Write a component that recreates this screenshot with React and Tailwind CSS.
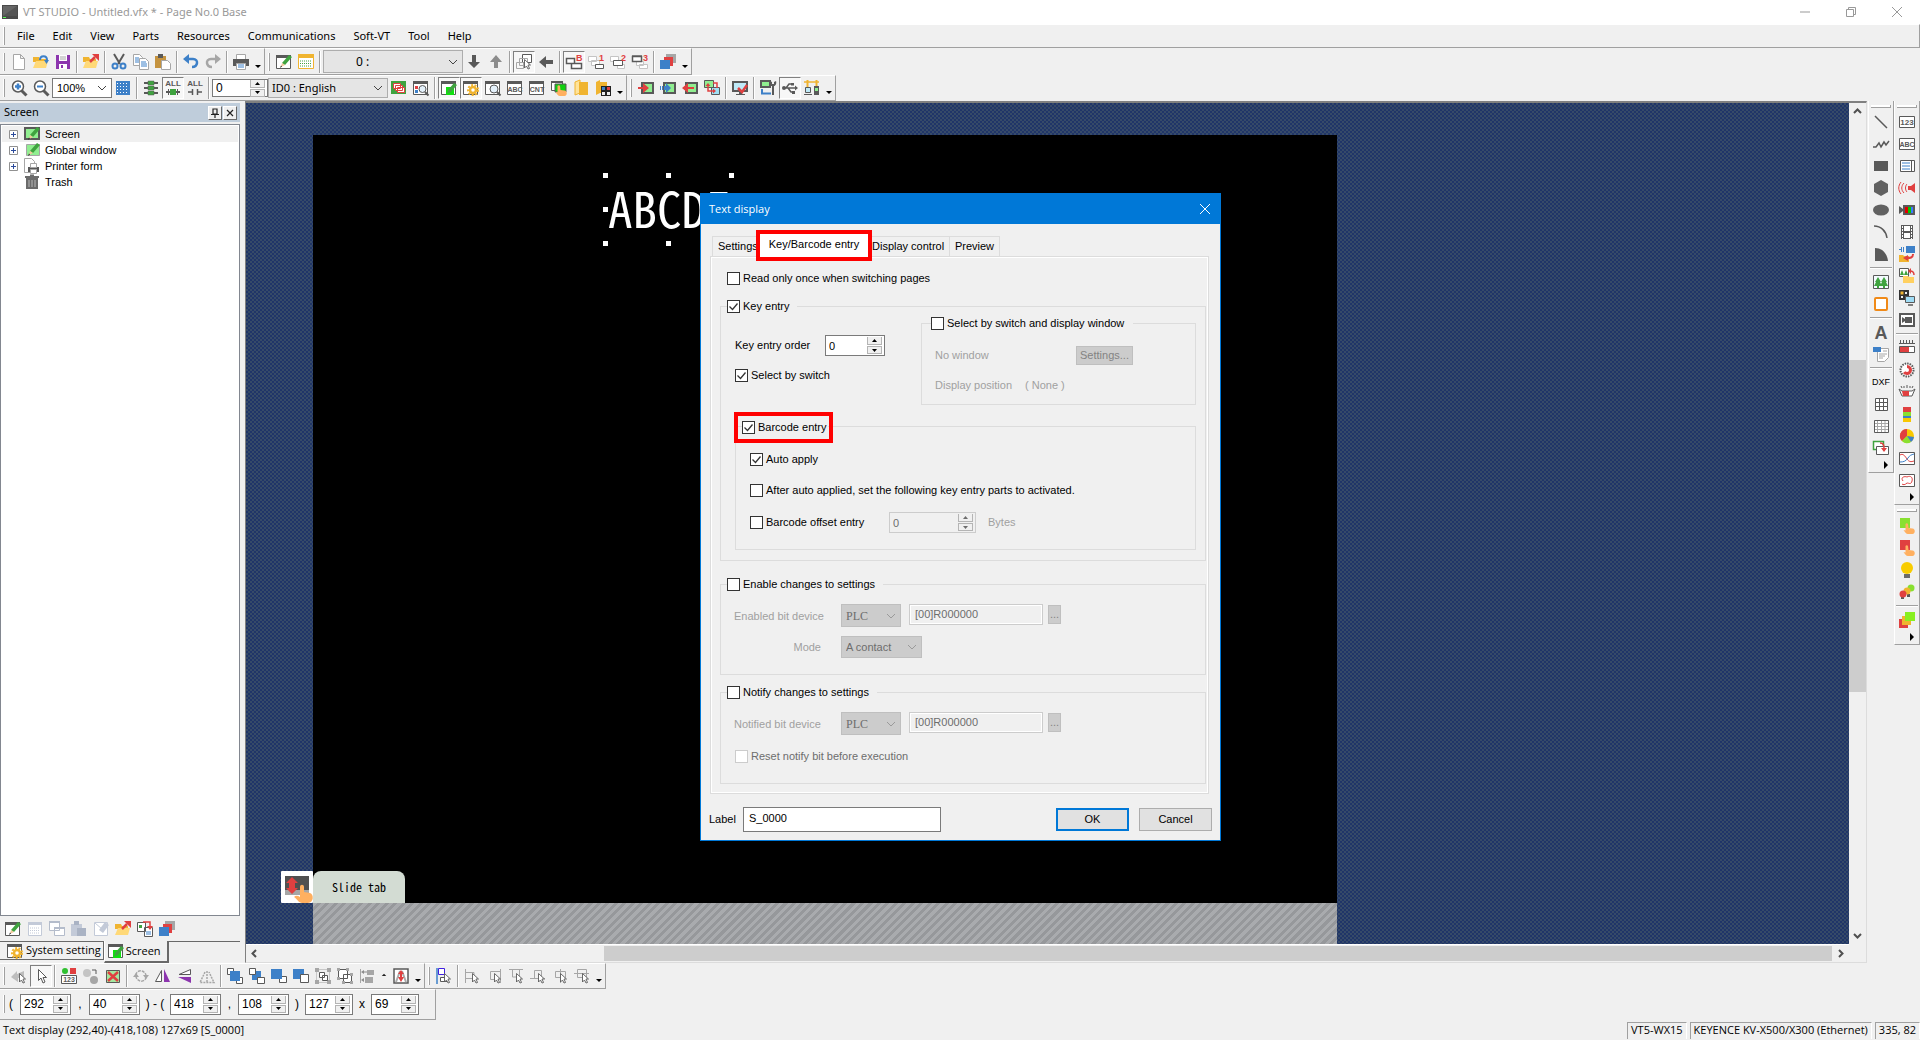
import { Fragment } from "react"

const K = "#595959"
const G = "#a6a6a6"
const B = "#3d80c8"
const R = "#e04040"
const Y = "#f0b430"
const N = "#3fa33f"
const L = "#90ee90"

const folder = (
  <>
    <path d="M0 3h6l1 2h6v3H0z" fill={Y} />
    <path d="M0 14l3-7h12l-2 7z" fill="#ffd978" />
  </>
)
const win = (
  <>
    <path d="M.5 1.500h14v13H.5z" fill="#fff" stroke={K} />
    <path d="M0 1h15v3H0z" fill={K} />
  </>
)
const pencil = (
  <>
    <path d="M6 9l7-8 3 2-7 8z" fill={N} />
    <path d="M6 9l3 2-4 2z" fill="#f2c89a" />
    <path d="M5 11.500l1 1-2 1.500z" fill="#222" />
  </>
)
const cursor = <path d="M8.500 5.500v8.500l2-2 1.500 3 1.500-.5-1.500-3.500h2.500z" fill="#fff" stroke={K} strokeWidth=".9" />
const hand = <path d="M6.500 6c.5-1 2-1 2.500 0l.5 4 4 .5c3 .5 3 5 0 5.500H9c-2 0-3-2-4.500-4l2 .5z" fill="#ffb060" />
const layers = (
  <>
    <path d="M6 0h10v9H6z" fill={G} />
    <path d="M4 3h9v9H4z" fill={R} />
    <path d="M0 6h10v9H0z" fill={B} />
  </>
)

function Word({ children, color = K, size = 8, y = 11 }) {
  return (
    <text x="8" y={y} fontSize={size} fill={color} textAnchor="middle" fontFamily="Liberation Sans, sans-serif" fontWeight="bold">
      {children}
    </text>
  )
}

const glyphs = {
  app: (
    <>
      <path d="M0 1h16v14H0z" fill="#4a4a4a" />
      <path d="M1 2h14v10H1z" fill="#666" />
      <path d="M1 12L15 2v10z" fill="#555" />
      <path d="M1 13h3v1H1z" fill="#5f5" />
    </>
  ),
  new: <path d="M2.500.5h7l4 4v11h-11zM9.500.5v4h4" fill="#fff" stroke={G} />,
  open: (
    <>
      {folder}
      <path d="M7 6c0-5 7-5 7 0" fill="none" stroke={B} strokeWidth="2" />
      <path d="M11 6h5l-2.500 4z" fill={B} />
    </>
  ),
  save: (
    <>
      <path d="M1 1h14v14H1z" fill="#8c35ae" />
      <path d="M4 1h8v6H4zM4 10h8v5H4z" fill="#fff" />
      <path d="M5 3h6M5 5h6" stroke={G} />
      <path d="M6 11h2v3H6z" fill="#8c35ae" />
    </>
  ),
  export: (
    <>
      {folder}
      <path d="M7 8l5-5" stroke={R} strokeWidth="2.500" />
      <path d="M9 0h7v7z" fill={R} />
    </>
  ),
  cut: (
    <>
      <path d="M3 0l6 10M13 0L7 10" stroke={K} strokeWidth="2" />
      <circle cx="4" cy="12" r="2.500" fill="none" stroke={B} strokeWidth="2" />
      <circle cx="12" cy="12" r="2.500" fill="none" stroke={B} strokeWidth="2" />
    </>
  ),
  copy: (
    <>
      <path d="M.5.5h6l3 3v8h-9z" fill="#fff" stroke={G} />
      <path d="M2 4h4M2 6h4M2 8h4" stroke={B} />
      <path d="M6.500 4.500h6l3 3v8h-9z" fill="#fff" stroke={G} />
      <path d="M8 8h5M8 10h6M8 12h6" stroke={B} />
    </>
  ),
  paste: (
    <>
      <path d="M0 2h11v12H0z" fill="#c5933f" />
      <path d="M3 0h5v4H3z" fill={K} />
      <path d="M6.500 6.500h6l3 3v6h-9z" fill="#fff" stroke={G} />
    </>
  ),
  undo: (
    <>
      <path d="M3 5h7c6 0 5 8-1 8" fill="none" stroke={B} strokeWidth="2.500" />
      <path d="M0 5l6-5v10z" fill={B} />
    </>
  ),
  redo: (
    <>
      <path d="M13 5H6c-6 0-5 8 1 8" fill="none" stroke={G} strokeWidth="2.500" />
      <path d="M16 5l-6-5v10z" fill={G} />
    </>
  ),
  print: (
    <>
      <path d="M3.500.5h9v5h-9z" fill="#fff" stroke={G} />
      <path d="M0 5h16v7H0z" fill={K} />
      <path d="M3.500 9.500h9v6h-9z" fill="#fff" stroke={G} />
      <path d="M5 11h6M5 13h6" stroke={B} />
    </>
  ),
  edit: (
    <>
      {win}
      {pencil}
    </>
  ),
  calendar: (
    <>
      <path d="M.5.500h15v14H.5z" fill="#fff" stroke={Y} />
      <path d="M0 0h16v4H0z" fill={Y} />
      <path d="M2 7h12M2 9.500h12M2 12h12" stroke={N} strokeDasharray="1 1" />
    </>
  ),
  down: <path d="M6 1h4v7h4l-6 6-6-6h4z" fill={K} />,
  up: <path d="M6 14h4V8h4L8 1 2 8h4z" fill="#8c8c8c" />,
  left: <path d="M15 6v4H8v4L1 8l7-6v4z" fill={K} />,
  pick: (
    <>
      <path d="M6.500.5h9v8h-9z" fill="#fff" stroke={K} />
      <path d="M3.500 4.500h8v7h-8zM.5 8.500h7v6h-7z" fill="none" stroke={G} />
      {cursor}
    </>
  ),
  layerB: (
    <>
      <path d="M5.500 9.500h10v5h-10zM.5 4.500h8v5h-8z" fill="#fff" stroke={K} strokeWidth="1.500" />
      <text x="10" y="7" fontSize="9" fontWeight="bold" fill={R}>B</text>
    </>
  ),
  layer1: (
    <>
      <path d="M.5 2.500h8v5h-8zM3.500 6.500h8v5h-8z" fill="#fff" stroke="#c4c4c4" />
      <path d="M7.500 10.500h8v4h-8z" fill="#fff" stroke={K} />
      <text x="11" y="7" fontSize="9" fontWeight="bold" fill={R}>1</text>
    </>
  ),
  layer2: (
    <>
      <path d="M.5 2.500h8v5h-8zM7.500 10.500h7v4h-7z" fill="#fff" stroke="#c4c4c4" />
      <path d="M3.500 6.500h9v5h-9z" fill="#fff" stroke={K} />
      <text x="11" y="7" fontSize="9" fontWeight="bold" fill={R}>2</text>
    </>
  ),
  layer3: (
    <>
      <path d="M4.500 7.500h7v4h-7zM7.500 10.500h8v4h-8z" fill="#fff" stroke="#c4c4c4" />
      <path d="M.5 2.500h9v5h-9zM0 2h10" fill="#fff" stroke={K} strokeWidth="1.500" />
      <text x="11" y="7" fontSize="9" fontWeight="bold" fill={R}>3</text>
    </>
  ),
  layers,
  zoomIn: (
    <>
      <path d="M10.500 10.500l5 5" stroke={K} strokeWidth="3" />
      <circle cx="7" cy="6.500" r="5.500" fill="#fff" stroke={K} strokeWidth="1.500" />
      <path d="M4 6.500h6M7 3.500v6" stroke={B} strokeWidth="2.500" />
    </>
  ),
  zoomOut: (
    <>
      <path d="M10.500 10.500l5 5" stroke={K} strokeWidth="3" />
      <circle cx="7" cy="6.500" r="5.500" fill="#fff" stroke={K} strokeWidth="1.500" />
      <path d="M4 6.500h6" stroke={B} strokeWidth="2" />
    </>
  ),
  grid: (
    <>
      <path d="M1 1h14v14H1z" fill={B} />
      <path d="M2 3.500h12M2 6.500h12M2 9.500h12M2 12.500h12" stroke="#fff" strokeDasharray="1 2" />
    </>
  ),
  parts: (
    <>
      <path d="M1 3h14M1 8h14M1 13h14" stroke={K} strokeWidth="2" />
      <path d="M5 1h6v4H5zM5 6h6v4H5zM5 11h6v4H5z" fill={N} stroke={K} strokeWidth=".5" />
    </>
  ),
  all1: (
    <>
      <Word size={8} y={6}>ALL</Word>
      <path d="M1 12h14" stroke={K} strokeWidth="2" />
      <path d="M5 9h6v6H5z" fill={N} />
      <path d="M3 9h1v6H3zM12 9h1v6h-1z" fill={K} />
    </>
  ),
  all2: (
    <>
      <Word size={8} y={6}>ALL</Word>
      <path d="M1 12h4M11 12h4M5.500 9v6M10.500 9v6" stroke={K} strokeWidth="1.500" />
    </>
  ),
  lang: (
    <>
      <path d="M0 1h15v13H0z" fill={N} />
      <path d="M2.500 3.500h7v5h-7zM6.500 7.500h7v5h-7zM4.500 5.500h7v5h-7z" fill="#fff" stroke={R} />
    </>
  ),
  findWin: (
    <>
      {win}
      <path d="M2 6h3v3H2z" fill={R} />
      <path d="M2 10h3v3H2z" fill={B} />
      <circle cx="9.500" cy="9" r="3.500" fill="#e4f1fb" stroke={K} />
      <path d="M12 12l3.500 3.500" stroke={K} strokeWidth="2" />
    </>
  ),
  green: (
    <>
      {win}
      <path d="M5 7h8v8H5z" fill="#10e010" />
      <path d="M7 10l6-7 3 2-6 7-4 1.500z" fill={N} />
    </>
  ),
  gear: (
    <>
      {win}
      <circle cx="10" cy="10" r="5" fill="none" stroke={Y} strokeWidth="2" strokeDasharray="2 1.500" />
      <circle cx="10" cy="10" r="3" fill="#fff" stroke={Y} strokeWidth="2.500" />
    </>
  ),
  preview: (
    <>
      {win}
      <circle cx="9" cy="9" r="4" fill="#e4f1fb" stroke={K} />
      <path d="M12 12l3.500 3.500" stroke={K} strokeWidth="2" />
    </>
  ),
  abc: (
    <>
      {win}
      <Word size={7} y={12}>ABC</Word>
    </>
  ),
  cnt: (
    <>
      {win}
      <Word size={7} y={12}>CNT</Word>
    </>
  ),
  touch: (
    <>
      <path d="M.5 1.500h11v9H.5z" fill="#fff" stroke={K} />
      <path d="M0 1h12v2H0z" fill={K} />
      <path d="M4 4h11v8H4z" fill="#10d010" stroke={K} />
      {hand}
    </>
  ),
  book: (
    <>
      <path d="M2 2l5-2v13l-5 2z" fill="#ffe39a" stroke={Y} />
      <path d="M6 2h9v13H6z" fill={Y} />
    </>
  ),
  bookPic: (
    <>
      <path d="M1 2l4-2v13l-4 2zM5 2h7v11H5z" fill={Y} />
      <path d="M6 6h10v10H6z" fill="#222" />
      <path d="M7 7h3v3H7z" fill={B} />
      <path d="M12 7h3v3h-3z" fill={R} />
      <path d="M7 12h3v3H7zM12 12h3v3h-3z" fill="#eee" />
    </>
  ),
  sendRed: (
    <>
      <path d="M3 2h13v12H3z" fill={K} />
      <path d="M5 4h9v8H5z" fill={L} />
      <path d="M0 7h5V3l6 5-6 5V9H0z" fill={R} />
    </>
  ),
  sendBlue: (
    <>
      <path d="M3 2h13v12H3z" fill={K} />
      <path d="M5 4h9v8H5z" fill={L} />
      <path d="M0 6h1v4H0zM2 6h1v4H2zM4 6h2V3l5 5-5 5v-3H4z" fill={B} />
    </>
  ),
  recv: (
    <>
      <path d="M3 2h13v12H3z" fill={K} />
      <path d="M5 4h9v8H5z" fill={L} />
      <path d="M12 7H6V3L0 8l6 5V9h6z" fill={R} />
    </>
  ),
  swap: (
    <>
      <path d="M.5.5h9v7h-9z" fill={L} stroke={K} />
      <path d="M7.500 7.500h8v7h-8z" fill="#9fe0f5" stroke={K} />
      <path d="M4 5v6h6M9 3h4v5" fill="none" stroke={R} strokeWidth="1.500" />
      <path d="M1.500 6L4 3l2.500 3zM9 8.500l3 2.500-3 2.500z" fill={R} />
    </>
  ),
  monitor: (
    <>
      <path d="M1 2h14v9H1z" fill="#bfeaf8" stroke={K} strokeWidth="2" />
      <path d="M7 11h3v3h3v1H4v-1h3z" fill={K} />
      <path d="M6 8l4 4 5-7" fill="none" stroke={R} strokeWidth="2.500" />
    </>
  ),
  setup: (
    <>
      <path d="M0 0h11v8H0z" fill={K} />
      <path d="M2 2h7v4H2z" fill={L} />
      <path d="M2 9v4.500h9" fill="none" stroke={B} strokeWidth="2" />
      <path d="M10 1l2 1v2h2V2l2-1c1 3-1 5-2 5v9h-2V6c-2 0-3-2-2-5z" fill={K} />
    </>
  ),
  usb: (
    <>
      <path d="M1 8h13M4 8l3-4h3M6 8l3 4h2" fill="none" stroke={K} strokeWidth="1.500" />
      <circle cx="2" cy="8" r="2" fill={K} />
      <path d="M13 5.500l3 2.500-3 2.500zM9 3h3v2.500H9zM10 11h3v3h-3z" fill={K} />
    </>
  ),
  net: (
    <>
      <path d="M0 2h15" stroke={Y} strokeWidth="1.500" />
      <path d="M3.500 0v7M12.500 0v6" stroke={Y} strokeWidth="2" />
      <path d="M1.500 7.500h5v5h-5zM0 14.500h8" fill="#bfeaf8" stroke={K} />
      <path d="M10 6h5v9h-5z" fill={K} />
      <path d="M11 8h3v3h-3z" fill={L} />
    </>
  ),
  // tree
  treeScreen: (
    <>
      <path d="M1 2h14v11H1z" fill={L} stroke={K} strokeWidth="2" />
      {pencil}
    </>
  ),
  treeGlobal: (
    <>
      <path d="M2.500 2.500h13v11h-13z" fill={L} stroke={G} />
      {pencil}
    </>
  ),
  treePrint: (
    <>
      <path d="M.5.500h7l3 3v11H.5z" fill="#fff" stroke={G} />
      <path d="M4 9h11v5H4z" fill={K} />
      <path d="M6.500 5.500h6v4h-6zM6.500 11.500h6v4h-6z" fill="#fff" stroke={G} />
    </>
  ),
  trash: (
    <>
      <path d="M2 4h12v11H2z" fill="#6b6b6b" />
      <path d="M1 3h14M6 1.500h4" stroke="#6b6b6b" strokeWidth="2" />
      <path d="M5 6v7M8 6v7M11 6v7" stroke="#bbb" />
    </>
  ),
  // panel footer
  calOff: (
    <>
      <path d="M1.500 1.500h13v13h-13z" fill="#fff" stroke="#c3cad8" />
      <path d="M1 1h14v3H1z" fill="#c3cad8" />
      <path d="M3 7h10M3 9.500h10M3 12h10" stroke="#c3cad8" strokeDasharray="1 1" />
    </>
  ),
  copyOff: (
    <>
      <path d="M.5.500h10v9H.5zM5.500 6.500h10v8h-10z" fill="#fff" stroke="#b4bccb" />
      <path d="M0 0h11v2H0zM5 6h11v2H5z" fill="#b4bccb" />
    </>
  ),
  pasteOff: (
    <>
      <path d="M0 3h11v12H0z" fill="#c3cad8" />
      <path d="M3 0h5v4H3z" fill="#aab3c4" />
      <path d="M6 7h9v8H6z" fill="#aab3c4" />
    </>
  ),
  editOff: (
    <>
      <path d="M1.500 1.500h13v13h-13z" fill="#fff" stroke="#c3cad8" />
      <path d="M6 9l6-8 4 3-6 8z" fill="#c3cad8" />
      <path d="M2 2l7 6" stroke="#c3cad8" />
    </>
  ),
  convert: (
    <>
      <path d="M.5 1.500h8v9h-8zM7.500 6.500h8v9h-8z" fill="#fff" stroke={K} />
      <path d="M2 4h3v3H2z" fill={N} />
      <path d="M9 11h5M9 13h5" stroke={B} />
      <path d="M6 1h7v6" fill="none" stroke={R} strokeWidth="1.500" />
      <path d="M10 5h6l-3 4z" fill={R} />
    </>
  ),
  // bottom bar
  ghost: (
    <>
      <path d="M0 9l6-6v3l7-3v6l-6 1v4z" fill="#bdbdbd" />
      {cursor}
    </>
  ),
  pointer: <path d="M5.500 1.500v11l2.500-2.500 2 5 2-1-2-4.500h3.500z" fill="#fff" stroke={K} />,
  id: (
    <>
      <circle cx="4" cy="3" r="3" fill="#30c030" />
      <path d="M9 0h6v6H9z" fill={R} />
      <path d="M.5 7.500h15v8H.5z" fill="#fff" stroke={K} />
      <Word size={7} y={14}>123</Word>
    </>
  ),
  swapOff: (
    <>
      <circle cx="4" cy="5" r="4" fill="#c4c4c4" />
      <circle cx="11" cy="12" r="4" fill={G} />
      <path d="M9 2h4v4" fill="none" stroke={K} />
    </>
  ),
  del: (
    <>
      <path d="M1.500 2.500h13v12h-13z" fill="#a5e8a0" stroke={K} />
      <path d="M3 4l10 9M13 4L3 13" stroke={R} strokeWidth="2.500" />
    </>
  ),
  rotate: (
    <>
      <path d="M3 7c0-5 8-6 10 0M13 9c0 5-8 6-10 0" fill="none" stroke={G} strokeWidth="1.500" strokeDasharray="3 1" />
      <path d="M10 7h6l-3 4zM0 9h6L3 5z" fill={G} />
    </>
  ),
  flipH: (
    <>
      <path d="M6.500 2.500v11H.5z" fill="#fff" stroke={K} />
      <path d="M9 1l6 13H9z" fill="#8c35ae" />
    </>
  ),
  flipV: (
    <>
      <path d="M13.500 1.500v5H2z" fill="#fff" stroke={K} />
      <path d="M14 9v6L1 9z" fill="#8c35ae" />
    </>
  ),
  tri: <path d="M8 3v11M6 4L1 14.500h14L10 4" fill="none" stroke={G} strokeDasharray="2 1" strokeWidth="1.500" />,
  front: (
    <>
      <path d="M.5.5h6v6h-6zM9.500 9.500h6v6h-6z" fill="#fff" stroke={K} />
      <path d="M3 3h10v10H3z" fill={B} />
    </>
  ),
  fwd: (
    <>
      <path d="M3 3h9v9H3z" fill={B} />
      <path d="M.5.5h6v6h-6zM8.500 9.500h7v6h-7z" fill="#fff" stroke={K} />
    </>
  ),
  back1: (
    <>
      <path d="M8.500 8.500h7v6h-7z" fill="#fff" stroke={K} />
      <path d="M0 1h11v10H0z" fill={B} />
    </>
  ),
  back2: (
    <>
      <path d="M0 1h11v10H0z" fill={B} />
      <path d="M7.500 6.500h8v8h-8z" fill="#fff" stroke={K} />
    </>
  ),
  group: (
    <>
      <path d="M1.500 1.500h13v13h-13z" fill="none" stroke="#c8c8c8" />
      <path d="M0 0h4v4H0zM12 0h4v4h-4zM0 12h4v4H0zM12 12h4v4h-4z" fill={G} />
      <path d="M4.500 4.500h5v5h-5zM7.500 7.500h5v5h-5z" fill="#fff" stroke={K} />
    </>
  ),
  ungroup: (
    <>
      <path d="M1.500 1.500h9v9h-9zM6.500 6.500h8v8h-8z" fill="#fff" stroke={K} />
      <path d="M0 0h3v3H0zM9 0h3v3H9zM0 9h3v3H0zM13 5h3v3h-3zM5 13h3v3H5zM13 13h3v3h-3z" fill={G} />
    </>
  ),
  align: (
    <>
      <path d="M1.500 1v14" stroke={G} />
      <path d="M8 2h7v5H8zM6 9h8v6H6z" fill={G} />
      <path d="M2 4l3-2v4zM2 12l3-2v4z" fill="#8c8c8c" />
      <path d="M4 4h4" stroke="#8c8c8c" />
    </>
  ),
  smallUp: <path d="M5 8l3-3 3 3z" fill="#222" />,
  fitA: (
    <>
      <path d="M1 1h14v14H1z" fill="#fff" stroke={K} strokeWidth="1.500" />
      <path d="M3 14L7 3M13 14L9 3" stroke="#aaa" strokeWidth="2" />
      <path d="M8 2l3 4H9v3h2l-3 5-3-5h2V6H5z" fill={R} />
    </>
  ),
  snap: (
    <>
      <path d="M1 0v16" stroke={B} strokeWidth="1.500" />
      <path d="M2.500.5h6v6h-6z" fill="#fff" stroke="#4020e0" />
      <path d="M4.500 9.500h7v4h-7z" fill="#fff" stroke={K} />
      {cursor}
    </>
  ),
  al1: (
    <>
      <path d="M1.500 1v14M2 4.500h8v6H2" fill="none" stroke={G} />
      {cursor}
    </>
  ),
  al2: (
    <>
      <path d="M14.500 1v14M14 3.500H4.500v8H9" fill="none" stroke={G} />
      {cursor}
    </>
  ),
  al3: (
    <>
      <path d="M1 1.500h14M4.500 2v7h7V2" fill="none" stroke={G} />
      {cursor}
    </>
  ),
  al4: (
    <>
      <path d="M0 10.500h15M4.500 10V2.500h7V10" fill="none" stroke={G} />
      {cursor}
    </>
  ),
  al5: (
    <>
      <path d="M8.500 1v14M3.500 3.500h10v6h-10z" fill="none" stroke={G} />
      {cursor}
    </>
  ),
  al6: (
    <>
      <path d="M0 5.500h15M3.500 1.500h9v8h-9z" fill="none" stroke={G} />
      {cursor}
    </>
  ),
  // drawing tools
  line: <path d="M2 2l12 12" stroke={K} strokeWidth="1.500" />,
  poly: <path d="M0 11h3l3-4 2 4 3-5 2 3 3-4" fill="none" stroke={K} strokeWidth="1.500" />,
  rect: <path d="M1 3h14v10H1z" fill={K} />,
  hex: <path d="M8 0l7 4v8l-7 4-7-4V4z" fill="#616161" />,
  ellipse: <ellipse cx="8" cy="8" rx="8" ry="5.500" fill="#616161" />,
  arc: <path d="M1 2c7 0 12 5 13 12" fill="none" stroke={K} strokeWidth="1.500" />,
  pie: <path d="M2 2c7 0 12 5 13 13H2z" fill={K} />,
  image: (
    <>
      <path d="M.5 1.500h15v13H.5z" fill="#f4faff" stroke={K} />
      <path d="M5 3L2 8h1l-2 4h3v2h2v-2h3L7 8h1zM11 3L8 8h1l-2 4h3v2h2v-2h3l-2-4h1z" fill={N} />
    </>
  ),
  frame: <rect x="2" y="2" width="12" height="12" rx="1" fill="#fff" stroke="#f08a18" strokeWidth="2" />,
  letter: <Word size={18} y={15}>A</Word>,
  doc: (
    <>
      <path d="M4.500 2.500h11v9l-4 4h-7z" fill="#fff" stroke={G} />
      <path d="M0 1h8v5H0z" fill={B} />
      <path d="M10 5h4M6 8h8M6 10h6M6 12h4" stroke={G} />
    </>
  ),
  table: <path d="M2.500 2.500h12v12h-12zM2.500 6.500h12M2.500 10.500h12M6.500 2.500v12M10.500 2.500v12" fill="#fff" stroke={K} />,
  table2: (
    <>
      <path d="M1.500 2.500h14v12h-14z" fill="#fff" stroke={K} />
      <path d="M2 5.500h13M2 8.500h13M2 11.500h13M4.500 3v11M8.500 3v11M12 3v11" stroke={G} />
    </>
  ),
  link: (
    <>
      <path d="M.5 1.500h10v8H.5z" fill="#fff" stroke={N} strokeWidth="1.500" />
      <path d="M3.500 6.500h12v8h-12z" fill="#fff" stroke={K} />
      <path d="M7 3c4 0 4 3 4 6" fill="none" stroke={R} strokeWidth="1.500" />
      <path d="M8 8h6l-3 4z" fill={R} />
    </>
  ),
  num: (
    <>
      <path d="M.5 2.500h15v11H.5z" fill="#fff" stroke={K} />
      <Word size={8}>123</Word>
    </>
  ),
  txt: (
    <>
      <path d="M.5 2.500h15v11H.5z" fill="#fff" stroke={K} />
      <Word size={7}>ABC</Word>
    </>
  ),
  list: (
    <>
      <path d="M1.500 2.500h14v11h-14zM12.500 3v10" fill="#fff" stroke={K} />
      <path d="M3 5h8M3 8h8M3 11h8" stroke={B} />
    </>
  ),
  sound: (
    <>
      <path d="M9 6h3l4-3v10l-4-3H9z" fill={R} />
      <path d="M8 4c-2 2-2 6 0 8M5 3c-3 3-3 7 0 10M2 2c-3 4-3 8 0 12" fill="none" stroke={R} />
    </>
  ),
  camera: (
    <>
      <path d="M0 4l4 3v2l-4 3zM4 3h12v10H4z" fill={K} />
      <path d="M6 5h3v6H6z" fill="#e00000" />
      <path d="M9 5h3v6H9z" fill="#00c800" />
      <path d="M12 5h2v6h-2z" fill="#3a78ff" />
    </>
  ),
  film: (
    <>
      <path d="M2 1h12v14H2z" fill={K} />
      <path d="M5 2h6v5H5zM5 9h6v5H5z" fill="#fff" />
      <path d="M3.500 2v13M12.500 2v13" stroke="#fff" strokeDasharray="2 1" />
    </>
  ),
  ladder: (
    <>
      <path d="M7 0h9v7H7zM0 3h2v1H0zM2 1h1v5H2zM4 1h1v5H4z" fill={B} />
      <path d="M0 9h4l1 1h5v6H0z" fill={Y} />
      <path d="M14 8c0 4-3 4-6 4" fill="none" stroke={R} strokeWidth="2" />
      <path d="M9 9v6l-5-3z" fill={R} />
    </>
  ),
  imgFolder: (
    <>
      <path d="M.5.500h9v8h-9z" fill="#fff" stroke={K} />
      <path d="M3 2L1 7h4zM7 2L5 7h4z" fill={N} />
      <path d="M4 8h5l1 1h5v6H4z" fill="#ffd060" />
      <path d="M15 7c0-3-2-4-4-4" fill="none" stroke={R} strokeWidth="1.500" />
      <path d="M12 0v6l-3-3z" fill={R} />
    </>
  ),
  remote: (
    <>
      <path d="M0 0h10v10H0z" fill="#333" />
      <path d="M1.500 1.500h3v3h-3z" fill={Y} />
      <path d="M6 2h2v2H6zM2 6h2v2H2z" fill="#eee" />
      <path d="M6.500 6.500h9v6h-9z" fill="#9fdcf5" stroke={K} />
      <path d="M9 15h5" stroke={K} strokeWidth="1.500" />
    </>
  ),
  video: (
    <>
      <path d="M1 2h14v12H1z" fill="#fff" stroke={K} strokeWidth="2" />
      <path d="M3 5l3 2v2l-3 2zM6 5h7v6H6z" fill={K} />
    </>
  ),
  meter: (
    <>
      <path d="M0 3.500h16M1.500 0v3M4.500 0v3M7.500 0v3M10.500 0v3M13.500 0v3" stroke={K} />
      <path d="M.5 6.500h15v6H.5z" fill="#fff" stroke={K} />
      <path d="M1 7h9v5H1z" fill={R} />
    </>
  ),
  gauge: (
    <>
      <circle cx="8" cy="8" r="6.500" fill="#fff" stroke={K} strokeWidth="2" strokeDasharray="1.500 1" />
      <path d="M8 3a5 5 0 1 1-4 8l4-3z" fill={R} />
      <circle cx="8" cy="8" r="2" fill="#fff" />
    </>
  ),
  halfGauge: (
    <>
      <path d="M0 5l3 7h10l3-7-3 2H3z" fill="#fff" stroke={K} />
      <path d="M3 7h7v5H4z" fill={R} />
      <path d="M2 2l1 2M5 2v2M8 1v3M11 2v2M14 2l-1 2" stroke={K} />
    </>
  ),
  bar: (
    <>
      <path d="M4 1h8v5H4z" fill={R} />
      <path d="M4 6h8v4H4z" fill="#8ae030" />
      <path d="M4 10h8v2H4z" fill={B} />
      <path d="M4 12h8v4H4z" fill="#f8c800" />
    </>
  ),
  pieChart: (
    <>
      <circle cx="8" cy="8" r="7" fill="#f8c800" />
      <path d="M8 8V1A7 7 0 0 0 3 13z" fill={R} />
      <path d="M8 8l-5 5a7 7 0 0 0 9 1z" fill="#8ae030" />
      <path d="M8 8l4 6a7 7 0 0 0 3-5z" fill={B} />
    </>
  ),
  trend: (
    <>
      <path d="M.5 2.500h15v12H.5z" fill="#fff" stroke={K} />
      <path d="M1 5c3-2 5 1 7 4s4 3 7 2" fill="none" stroke={R} />
      <path d="M1 12c4 0 6-1 8-4s3-3 6-4" fill="none" stroke={B} />
    </>
  ),
  xy: (
    <>
      <path d="M.5 2.500h15v12H.5z" fill="#fff" stroke={K} />
      <path d="M4 9C1 5 6 4 8 5c4-2 6 1 5 4-1 4-3 2-5 2-2 2-4 2-5 1" fill="none" stroke={R} />
    </>
  ),
  btnGreen: (
    <>
      <path d="M1 0h10v10H1z" fill="#88e030" />
      {hand}
    </>
  ),
  btnRed: (
    <>
      <path d="M1 0h10v10H1z" fill={R} />
      {hand}
    </>
  ),
  lamp: (
    <>
      <circle cx="8" cy="6" r="6" fill="#f8cc00" />
      <path d="M5 12h6v4H5z" fill="#6b6b6b" />
    </>
  ),
  lamps: (
    <>
      <path d="M2 12h3v3H2zM8 10h3v3H8z" fill={K} />
      <circle cx="12" cy="4" r="3.500" fill="#88e030" />
      <circle cx="8" cy="7" r="3.500" fill={Y} />
      <circle cx="4" cy="10" r="3.500" fill={R} />
    </>
  ),
  stack: (
    <>
      <path d="M0 7h9v9H0z" fill={R} />
      <path d="M3 4h9v9H3z" fill={Y} />
      <path d="M6 0h10v9H6z" fill="#88f020" />
    </>
  ),
  slide: (
    <>
      <rect width="16" height="16" rx=".5" fill="#fff" />
      <path d="M2 2.500h12v8H2z" fill="#505050" />
      <path d="M2 9.500h12v2.500H2z" fill={G} />
      <path d="M5.500 3L8.500 6H7v2.500h1.500L5.500 11.500 2.500 8.500H4V6H2.500z" fill={R} />
      <path d="M9.500 8c0-1.500 2-1.500 2 0v2.500l3 .5c2 .5 2 5-1 5h-3c-1.500 0-2.500-2-4-3 1-1 2-.5 3 0z" fill="#ffb060" />
    </>
  ),
}

function Icon({ name, className = "size-4" }) {
  return (
    <svg viewBox="0 0 16 16" className={`${className} shrink-0 overflow-visible`} aria-hidden="true">
      {glyphs[name]}
    </svg>
  )
}

function Tool({ name }) {
  // a trailing * marks a latched tool
  const pressed = name.endsWith("*")
  const id = name.replace("*", "")
  return (
    <button
      type="button"
      aria-label={id}
      className={`flex size-[22px] shrink-0 items-center justify-center border ${
        pressed ? "border-t-[#808080] border-l-[#808080] border-r-white border-b-white bg-[#f7f7f7]" : "border-transparent"
      }`}
    >
      {id === "dxf" ? <span className="text-[9px]">DXF</span> : <Icon name={id} />}
    </button>
  )
}

function Tools({ items, vertical }) {
  return items.split(" ").map((it, i) => (
    <Fragment key={i}>
      {it === "|" && !vertical && <span className="mx-[2px] h-[22px] w-[2px] shrink-0 border-l border-l-[#a0a0a0] bg-white" />}
      {it === "|" && vertical && <span className="my-[2px] h-[2px] w-[22px] shrink-0 border-t border-t-[#a0a0a0] bg-white" />}
      {it === "v" && !vertical && (
        <button type="button" aria-label="More" className="flex h-[22px] w-3 shrink-0 items-end justify-center pb-1">
          <svg viewBox="0 0 6 4" className="h-1 w-[6px]"><path d="M0 0h6L3 3z" /></svg>
        </button>
      )}
      {it === "v" && vertical && (
        <button type="button" aria-label="More" className="flex h-3 w-[22px] shrink-0 items-center justify-end pr-1">
          <svg viewBox="0 0 4 8" className="h-2 w-1"><path d="M0 0l4 4-4 4z" /></svg>
        </button>
      )}
      {it !== "|" && it !== "v" && <Tool name={it} />}
    </Fragment>
  ))
}

function Bar({ children, className = "" }) {
  return (
    <div className={`flex items-center border-t border-r border-b border-t-white border-r-[#a0a0a0] border-b-[#a0a0a0] ${className}`}>
      <span className="ml-[3px] mr-[3px] h-[18px] w-[2px] shrink-0 border-r border-r-[#a0a0a0] bg-white" />
      {children}
    </div>
  )
}

function VBar({ items }) {
  return (
    <div className="flex w-[26px] flex-col items-center border-l border-r border-b border-l-white border-r-[#a0a0a0] border-b-[#a0a0a0] pb-px">
      <span className="mt-1 mb-[3px] h-[3px] w-5 border-r border-b border-[#a0a0a0] bg-white" />
      <Tools items={items} vertical />
    </div>
  )
}

function Chevron({ className }) {
  return (
    <svg viewBox="0 0 10 6" className={`pointer-events-none absolute right-[5px] top-1/2 h-[6px] w-[10px] -translate-y-1/2 ${className}`}>
      <path d="M1 1l4 4 4-4" fill="none" stroke="currentColor" />
    </svg>
  )
}

function Select({ label, value, className = "", selectClass = "", disabled }) {
  return (
    <span className={`relative shrink-0 ${className}`}>
      <select
        aria-label={label}
        disabled={disabled}
        className={`block size-full appearance-none border opacity-100 ${selectClass}`}
      >
        <option>{value}</option>
      </select>
      <Chevron className={disabled ? "text-[#9a9a9a]" : "text-[#444]"} />
    </span>
  )
}

function Spin({ label, value, id, className = "", disabled }) {
  return (
    <span className={`flex shrink-0 items-center border pr-[2px] ${disabled ? "border-[#ccc] bg-[#f0f0f0] text-[#6d6d6d]" : "border-[#7a7a7a] bg-white"} ${className}`}>
      <input id={id} aria-label={label} defaultValue={value} disabled={disabled} className="h-full w-0 flex-1 pl-[3px] outline-none" />
      <span className="flex w-[15px] flex-col gap-px">
        <button type="button" disabled={disabled} aria-label="Increase" className="flex h-2 items-center justify-center border border-t-0 border-[#b4b4b4] bg-[#f0f0f0]">
          <svg viewBox="0 0 5 3" className="h-[3px] w-[5px]"><path d="M0 3h5L2.500 0z" fill="currentColor" /></svg>
        </button>
        <button type="button" disabled={disabled} aria-label="Decrease" className="flex h-2 items-center justify-center border border-[#b4b4b4] bg-[#f0f0f0]">
          <svg viewBox="0 0 5 3" className="h-[3px] w-[5px]"><path d="M0 0h5L2.500 3z" fill="currentColor" /></svg>
        </button>
      </span>
    </span>
  )
}

function Check({ children, checked, disabled }) {
  return (
    <label className={`flex h-4 items-center gap-[3px] whitespace-nowrap ${disabled ? "text-[#6d6d6d]" : ""}`}>
      <span className="grid size-[13px] shrink-0">
        <input
          type="checkbox"
          defaultChecked={checked}
          disabled={disabled}
          className={`peer col-start-1 row-start-1 size-[13px] appearance-none border bg-white ${disabled ? "border-[#ccc]" : "border-[#333]"}`}
        />
        <svg viewBox="0 0 13 13" className="pointer-events-none invisible col-start-1 row-start-1 size-[13px] peer-checked:visible">
          <path d="M2.500 6.500l3 3 5-6" fill="none" stroke="#333" strokeWidth="1.300" />
        </svg>
      </span>
      {children}
    </label>
  )
}

function Group({ title, checked, marked, children, className = "", legendClass = "ml-[6px] pr-2" }) {
  return (
    <fieldset className={`border border-[#dcdcdc] ${className}`}>
      <legend className={`relative ${legendClass}`}>
        <Check checked={checked}>{title}</Check>
        {marked && <span className="pointer-events-none absolute -top-[5px] -right-[5px] -bottom-2 -left-2 border-4 border-[#f00]" />}
      </legend>
      {children}
    </fieldset>
  )
}

function DeviceRow({ label }) {
  return (
    <div className="flex items-start gap-2">
      <span className="-mr-2 w-[120px] pl-[13px] leading-[25px] text-[#a0a0a0]">{label}</span>
      <Select label={`${label} type`} value="PLC" disabled className="h-[23px] w-[60px]" selectClass="border-[#bfbfbf] bg-[#ccc] pl-1 font-['Liberation_Serif',serif] text-xs text-[#6d6d6d]" />
      <input
        aria-label={label}
        disabled
        defaultValue="[00]R000000"
        className="h-[21px] w-[134px] border border-[#ccc] pb-px pl-[5px] text-[#6d6d6d] ring-1 ring-inset ring-white"
      />
      <button type="button" disabled aria-label={`Browse ${label}`} className="-ml-[3px] mt-px h-[19px] w-[13px] border border-[#bfbfbf] bg-[#ccc] text-[#838383]">
        ...
      </button>
    </div>
  )
}

function TextDisplayDialog() {
  return (
    <div role="dialog" aria-label="Text display" className="absolute left-[700px] top-[193px] w-[521px] border border-[#0078d7] bg-[#f0f0f0] text-[11px] text-black">
      <div className="flex h-[30px] items-center justify-between bg-[#0078d7] pl-2 pr-[10px] font-['Open_Sans',sans-serif] text-white">
        Text display
        <button type="button" aria-label="Close">
          <svg viewBox="0 0 10 10" className="size-[10px]"><path d="M0 0l10 10M10 0L0 10" stroke="#fff" /></svg>
        </button>
      </div>

      <div role="tablist" className="relative ml-[11px] mt-3 flex h-5 items-stretch">
        <button role="tab" className="w-[47px] border border-b-0 border-[#dcdcdc] pl-[5px] text-left">Settings</button>
        <button role="tab" aria-selected="true" className="relative z-10 -my-[3px] w-[110px] bg-white pb-1">
          Key/Barcode entry
          <span className="pointer-events-none absolute -inset-x-[3px] -top-[3px] -bottom-[2px] border-4 border-[#f00]" />
        </button>
        <button role="tab" className="w-[81px] border border-b-0 border-l-0 border-[#dcdcdc] pl-[3px] text-left">Display control</button>
        <button role="tab" className="w-[50px] border border-b-0 border-l-0 border-[#dcdcdc]">Preview</button>
      </div>

      <div className="ml-[9px] mr-[11px] border border-[#dcdcdc] pt-[13px] pr-[2px] pb-[9px] pl-[9px] ring-1 ring-inset ring-white">
        <div className="pl-[7px]">
          <Check>Read only once when switching pages</Check>
        </div>

        <Group title="Key entry" checked className="mt-3 pb-[10px]">
          <div className="flex justify-between pl-[14px] pr-[9px]">
            <div className="pt-[21px]">
              <div className="flex items-center">
                <label htmlFor="order" className="w-[90px]">Key entry order</label>
                <Spin id="order" value="0" className="h-[21px] w-[60px]" />
              </div>
              <div className="mt-[11px]">
                <Check checked>Select by switch</Check>
              </div>
            </div>
            <Group title="Select by switch and display window" className="mt-px w-[275px] pb-[11px]" legendClass="ml-[9px] pr-[9px]">
              <div className="mt-[15px] flex h-[19px] items-center justify-between pl-[13px] pr-[62px] text-[#a0a0a0]">
                No window
                <button type="button" disabled className="h-full w-[57px] border border-[#bfbfbf] bg-[#ccc] text-[#838383]">Settings...</button>
              </div>
              <div className="mt-3 flex h-4 items-center gap-[13px] pl-[13px] text-[#a0a0a0]">
                <span>Display position</span>
                <span>( None )</span>
              </div>
            </Group>
          </div>

          <Group title="Barcode entry" checked marked className="ml-[14px] mr-[9px] mt-3 pb-4 pl-[14px]" legendClass="-ml-[8px] pt-[2px] pr-[2px]">
            <div className="pt-4">
              <Check checked>Auto apply</Check>
            </div>
            <div className="pt-[15px]">
              <Check>After auto applied, set the following key entry parts to activated.</Check>
            </div>
            <div className="mt-[14px] flex items-center">
              <div className="w-[139px]">
                <Check>Barcode offset entry</Check>
              </div>
              <Spin label="Barcode offset" value="0" disabled className="h-[21px] w-[87px]" />
              <span className="pl-3 text-[#a0a0a0]">Bytes</span>
            </div>
          </Group>
        </Group>

        <Group title="Enable changes to settings" className="mt-[15px] pb-4">
          <div className="pt-3">
            <DeviceRow label="Enabled bit device" />
          </div>
          <div className="mt-[7px] flex items-center">
            <span className="w-[120px] pr-5 text-right text-[#a0a0a0]">Mode</span>
            <Select label="Mode" value="A contact" disabled className="h-[22px] w-[81px]" selectClass="border-[#bfbfbf] bg-[#ccc] pl-1 text-[#6d6d6d]" />
          </div>
        </Group>

        <Group title="Notify changes to settings" className="mt-[9px] pb-[19px]">
          <div className="pt-3">
            <DeviceRow label="Notified bit device" />
          </div>
          <div className="mt-[11px] pl-[14px]">
            <Check disabled>Reset notify bit before execution</Check>
          </div>
        </Group>
      </div>

      <div className="mt-[13px] mb-2 flex h-[25px] items-center pl-2 pr-2">
        <label htmlFor="label" className="w-[34px]">Label</label>
        <input id="label" defaultValue="S_0000" className="h-full w-[198px] border border-[#7a7a7a] bg-white pb-1 pl-[5px]" />
        <button type="button" className="ml-auto h-[23px] w-[73px] border-2 border-[#0078d7] bg-[#e1e1e1]">OK</button>
        <button type="button" className="ml-[10px] h-[23px] w-[73px] border border-[#adadad] bg-[#e1e1e1]">Cancel</button>
      </div>
    </div>
  )
}

const tree = [
  { icon: "treeScreen", name: "Screen", open: true },
  { icon: "treeGlobal", name: "Global window", open: true },
  { icon: "treePrint", name: "Printer form", open: true },
  { icon: "trash", name: "Trash" },
]

function ScreenPanel() {
  return (
    <aside className="flex w-60 shrink-0 flex-col pt-[2px] text-[11px]">
      <div className="flex h-[19px] shrink-0 items-center gap-px bg-[#bfcddb] pl-1 pr-[3px] font-['Noto_Sans',sans-serif]">
        <span className="flex-1">Screen</span>
        {["M3 1h4v5H3zM1 6.500h8M5 7v3", "M2 2l6 6M8 2L2 8"].map((d, i) => (
          <button key={d} type="button" aria-label={i ? "Close" : "Pin"} className="flex size-[14px] items-center justify-center border border-t-white border-l-white border-r-[#696969] border-b-[#696969] bg-[#f0f0f0]">
            <svg viewBox="0 0 10 10" className="size-[10px]"><path d={d} fill="none" stroke="#222" strokeWidth="1.200" /></svg>
          </button>
        ))}
      </div>
      <ul className="mt-[2px] flex-1 border border-[#828790] bg-white p-px">
        {tree.map((n, i) => (
          <li key={n.name} className={`flex h-4 items-center pl-[7px] ${i === 0 ? "bg-[#f0f0f0]" : ""}`}>
            <span className="w-[15px]">
              {n.open && (
                <svg viewBox="0 0 9 9" className="size-[9px]">
                  <path d="M.5.5h8v8h-8z" fill="#fff" stroke="#919191" />
                  <path d="M2 4.500h5M4.500 2v5" stroke="#2b4a9b" />
                </svg>
              )}
            </span>
            <Icon name={n.icon} />
            <span className="pl-[5px]">{n.name}</span>
          </li>
        ))}
      </ul>
      <div className="flex h-[25px] items-center pl-[2px]">
        <Tools items="edit calOff copyOff pasteOff editOff export convert layers" />
      </div>
      <div className="flex h-[22px] items-start font-['Open_Sans',sans-serif]">
        <button type="button" className="flex h-[19px] items-center gap-[3px] border-t border-r border-b border-t-[#696969] border-r-[#696969] border-b-[#696969] pl-[7px] pr-[2px]">
          <Icon name="gear" />
          System setting
        </button>
        <button type="button" className="flex h-[22px] items-center gap-[2px] border-l border-r-2 border-b-2 border-l-white border-r-[#696969] border-b-[#696969] pl-[3px] pr-[6px]">
          <Icon name="green" />
          Screen
        </button>
        <span className="h-px flex-1 bg-[#696969]" />
      </div>
    </aside>
  )
}

function Arrow({ d }) {
  return (
    <button type="button" aria-label="Scroll" className="flex size-[17px] shrink-0 items-center justify-center">
      <svg viewBox="0 0 9 9" className="size-[9px]"><path d={d} fill="none" stroke="#505050" strokeWidth="2" /></svg>
    </button>
  )
}

const handles = [
  "left-[290px] top-[38px]",
  "left-[353px] top-[38px]",
  "left-[416px] top-[38px]",
  "left-[290px] top-[72px]",
  "left-[290px] top-[106px]",
  "left-[353px] top-[106px]",
]

function Canvas() {
  return (
    <section className="grid min-w-0 flex-1 grid-cols-[1fr_17px] grid-rows-[1fr_18px] border-t-2 border-r border-b border-l border-t-[#808080] border-r-[#dcdcdc] border-b-[#dcdcdc] border-l-[#808080]">
      <div className="relative overflow-hidden bg-[#203568] bg-[repeating-conic-gradient(#364a68_0_25%,#203568_0_50%)] bg-size-[4px_4px]">
        <div className="absolute left-[67px] top-8 h-[768px] w-[1024px] bg-black">
          <span className="absolute left-[295px] top-[38px] whitespace-nowrap font-['Noto_Sans_Mono_CJK_JP','Liberation_Sans_Narrow',sans-serif] text-[49px] leading-[68px] text-white">ABCDE</span>
          {handles.map((h) => (
            <span key={h} className={`absolute size-[5px] bg-white ${h}`} />
          ))}
          <div className="absolute bottom-0 left-0 flex h-8 w-[92px] items-center justify-center rounded-t-lg bg-[#d3dcd3] pb-px font-['Noto_Sans_Mono_CJK_JP','Liberation_Mono',monospace] text-xs font-medium text-black">
            Slide tab
          </div>
          <div className="absolute bottom-0 -left-8 flex size-8">
            <Icon name="slide" className="size-8" />
          </div>
        </div>
        <div className="absolute left-[67px] top-[800px] bottom-0 w-[1024px] bg-[repeating-linear-gradient(135deg,#a9abae_0_3px,#96989b_3px_6px)]" />
      </div>
      <div className="flex flex-col bg-[#f0f0f0]">
        <Arrow d="M1 6l3.500-3.500L8 6" />
        <div className="h-[240px]" />
        <div className="h-[332px] bg-[#cdcdcd]" />
        <div className="flex-1" />
        <Arrow d="M1 3l3.500 3.500L8 3" />
      </div>
      <div className="flex items-center border-t border-t-white">
        <Arrow d="M6 1L2.500 4.500 6 8" />
        <div className="w-[341px]" />
        <div className="h-[15px] flex-1 bg-[#cdcdcd]" />
        <Arrow d="M3 1l3.500 3.500L3 8" />
      </div>
      <div />
    </section>
  )
}

const menu = ["File", "Edit", "View", "Parts", "Resources", "Communications", "Soft-VT", "Tool", "Help"]
const field = "h-[21px] w-[51px]"

export default function App() {
  return (
    <div className="relative flex h-screen flex-col overflow-hidden bg-[#f0f0f0] font-['Liberation_Sans',sans-serif] text-xs text-black">
      <header className="flex h-6 shrink-0 items-center bg-white pl-[2px] font-['Noto_Sans',sans-serif] text-[11px] text-[#999]">
        <Icon name="app" />
        <span className="flex-1 pl-[5px]">VT STUDIO - Untitled.vfx * - Page No.0 Base</span>
        {["M0 5h10", "M.5 2.500h7v7h-7zM2.500 2V.5h7v7H8", "M0 0l10 10M10 0L0 10"].map((d, i) => (
          <button key={d} type="button" aria-label={["Minimize", "Restore", "Close"][i]} className="flex w-[46px] justify-center">
            <svg viewBox="0 0 10 10" className="size-[10px]"><path d={d} fill="none" stroke="#999" /></svg>
          </button>
        ))}
      </header>

      <Bar className="h-6 shrink-0 font-['Noto_Sans',sans-serif] text-[11px]">
        {menu.map((m) => (
          <button key={m} type="button" className="px-[9px]">{m}</button>
        ))}
      </Bar>

      <div className="flex h-[27px] shrink-0">
        <Bar>
          <Tools items="new open save | export | cut copy paste | undo redo | print v" />
        </Bar>
        <Bar>
          <Tools items="edit calendar |" />
          <Select label="Page" value="0   :" className="h-[23px] w-[140px]" selectClass="whitespace-pre border-[#adadad] bg-[#e5e5e5] pl-8 font-['Noto_Sans',sans-serif]" />
          <Tools items="down up | pick* left | layerB* layer1 layer2 layer3 | layers v" />
        </Bar>
      </div>

      <div className="flex h-[26px] shrink-0">
        <Bar>
          <Tools items="zoomIn zoomOut" />
          <Select label="Zoom" value="100%" className="h-5 w-[60px]" selectClass="border-[#7a7a7a] bg-white pl-1 text-[11px]" />
          <Tools items="grid | parts all1* all2 |" />
          <Spin label="Language number" value="0" className="h-[18px] w-14" />
          <Select label="Language" value="ID0 : English" className="h-5 w-[120px]" selectClass="border-[#adadad] bg-[#e5e5e5] pl-[3px] font-['Noto_Sans',sans-serif] text-[11px]" />
          <Tools items="lang findWin | green* gear* preview abc cnt touch book bookPic v" />
        </Bar>
        <Bar>
          <Tools items="sendRed sendBlue recv swap | monitor | setup usb* net v" />
        </Bar>
      </div>

      <main className="flex min-h-0 flex-1">
        <ScreenPanel />
        <span className="w-[5px] shrink-0" />
        <Canvas />
        <div className="flex shrink-0 items-start pl-px">
          <VBar items="line poly rect hex ellipse arc pie | image frame | letter doc | dxf table table2 link v" />
          <div>
            <VBar items="num txt list sound camera film ladder imgFolder remote video | meter gauge halfGauge bar pieChart trend xy v" />
            <VBar items="btnGreen btnRed lamp lamps | stack v" />
          </div>
        </div>
      </main>

      <div className="flex h-[26px] shrink-0">
        <Bar>
          <Tools items="ghost pointer* | id swapOff del | rotate flipH flipV tri | front fwd back1 back2 group ungroup align" />
          <button type="button" aria-label="Scroll tools" className="w-3"><Icon name="smallUp" className="h-4 w-3" /></button>
          <Tools items="fitA v" />
        </Bar>
        <Bar>
          <Tools items="snap | al1 al2 al3 al4 al5 al6 v" />
        </Bar>
      </div>

      <div className="flex h-[31px] shrink-0">
        <Bar className="pr-4 pb-px">
          <span className="w-3 pl-px">(</span>
          <Spin label="Left" value="292" className={field} />
          <span className="w-[18px] text-center">,</span>
          <Spin label="Top" value="40" className={field} />
          <span className="w-[30px] whitespace-nowrap text-center">) - (</span>
          <Spin label="Right" value="418" className={field} />
          <span className="w-[17px] text-center">,</span>
          <Spin label="Bottom" value="108" className={field} />
          <span className="w-4 text-center">)</span>
          <Spin label="Width" value="127" className="h-[21px] w-12" />
          <span className="w-[18px] text-center">x</span>
          <Spin label="Height" value="69" className="h-[21px] w-12" />
        </Bar>
      </div>

      <footer className="flex h-5 shrink-0 items-center gap-[3px] pl-[3px] font-['Open_Sans',sans-serif] text-[11px]">
        <span className="flex-1">Text display (292,40)-(418,108) 127x69 [S_0000]</span>
        {["VT5-WX15", "KEYENCE KV-X500/X300 (Ethernet)", "335, 82"].map((s) => (
          <span key={s} className="flex h-[17px] items-center border-t border-l border-r border-t-[#a0a0a0] border-l-[#a0a0a0] border-r-white px-[3px]">{s}</span>
        ))}
      </footer>

      <TextDisplayDialog />
    </div>
  )
}
